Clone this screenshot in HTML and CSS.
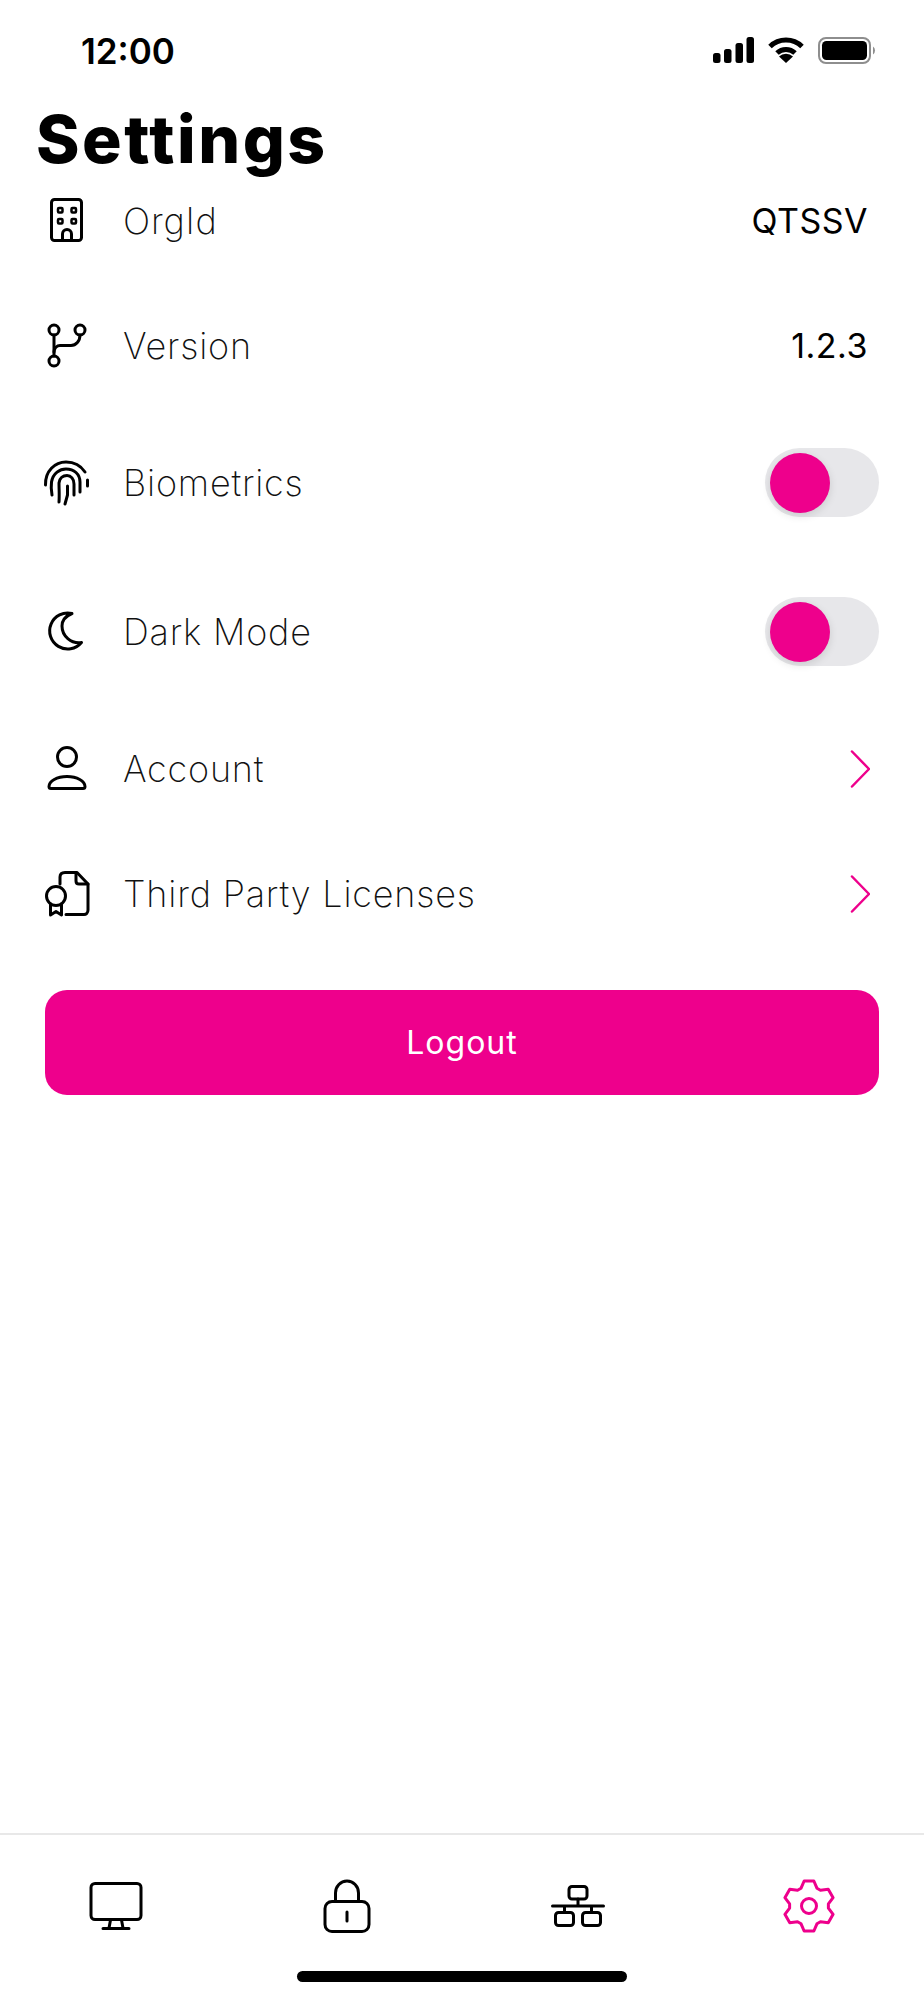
FILE: index.html
```html
<!DOCTYPE html>
<html lang="en">
<head>
    <meta charset="UTF-8">
    <meta name="viewport" content="width=device-width, initial-scale=1.0">
    <title>Settings</title>
    <link rel="stylesheet" href="styles.css">
</head>
<body>

<div class="status-bar">
    <span class="status-time">12:00</span>
    <div class="status-icons">
        <svg class="status-signal" width="41" height="26" viewBox="0 0 41 26">
            <rect x="0" y="16" width="7.5" height="10" rx="2.5"/>
            <rect x="11" y="12" width="7.5" height="14" rx="2.5"/>
            <rect x="22.5" y="6" width="7.5" height="20" rx="2.5"/>
            <rect x="33.5" y="0" width="7.5" height="26" rx="2.5"/>
        </svg>
        <svg class="status-wifi" width="36" height="26" viewBox="0 0 36 26">
            <path d="M2 9.5A23 23 0 0 1 34 9.5" fill="none" stroke="#000" stroke-width="5"/>
            <path d="M9 16A13 13 0 0 1 27 16" fill="none" stroke="#000" stroke-width="5"/>
            <path d="M18 26L11 19.5A10 10 0 0 1 25 19.5Z"/>
        </svg>
        <svg class="status-battery" width="58" height="27" viewBox="0 0 58 27">
            <rect x="1" y="1" width="51" height="25" rx="7" fill="none" stroke="#8e8e8e" stroke-width="2"/>
            <rect x="4" y="4" width="45" height="19" rx="4.5"/>
            <path d="M55 9.5a5 5 0 0 1 0 8Z" fill="#8e8e8e"/>
        </svg>
    </div>
</div>

<h1 class="page-title">Settings</h1>

<div class="settings-list">
    <div class="row">
        <svg class="row-icon" viewBox="0 0 48 48">
            <rect x="8.5" y="2.5" width="30" height="41" rx="3"/>
            <rect class="thin" x="15" y="11" width="4.5" height="4.5" rx="1"/>
            <rect class="thin" x="28.5" y="11" width="4.5" height="4.5" rx="1"/>
            <rect class="thin" x="15" y="22" width="4.5" height="4.5" rx="1"/>
            <rect class="thin" x="28.5" y="22" width="4.5" height="4.5" rx="1"/>
            <path d="M19.5 43V37a4.5 4.5 0 0 1 9 0V43"/>
        </svg>
        <span class="row-label">OrgId</span>
        <span class="row-value">QTSSV</span>
    </div>
    <div class="row">
        <svg class="row-icon" viewBox="0 0 48 48">
            <circle cx="11" cy="8" r="5"/>
            <circle cx="37" cy="8" r="5"/>
            <circle cx="11" cy="39" r="5"/>
            <path d="M11 13V34"/>
            <path d="M37 13C37 19 33 23.5 28 23.5H17C14 23.5 11 26 11 30"/>
        </svg>
        <span class="row-label">Version</span>
        <span class="row-value">1.2.3</span>
    </div>
    <div class="row row-toggle">
        <svg class="row-icon" viewBox="0 0 48 48">
            <path d="M2.500 26C2 12 12 3 23 3C31 3 38 7 42 13"/>
            <path d="M44.500 21V27"/>
            <path d="M9 36C8 31 8 27 8.500 23C10 14 17 10 23 10C31 10 37 15 37 23V33"/>
            <path d="M16 43C16.500 36 16 30 16 24C16.500 19 20 16.500 24 16.500C28 16.500 31 20 31 25V36"/>
            <path d="M24.500 27V36L22 45"/>
        </svg>
        <span class="row-label">Biometrics</span>
        <div class="toggle"><div class="toggle-knob"></div></div>
    </div>
    <div class="row row-toggle">
        <svg class="row-icon" viewBox="0 0 48 48">
            <path d="M29 5.500A18 18 0 1 0 38.500 34.500C28 36 19 28 19 18C19 12 23 8 29 5.500Z"/>
        </svg>
        <span class="row-label">Dark Mode</span>
        <div class="toggle"><div class="toggle-knob"></div></div>
    </div>
    <div class="row">
        <svg class="row-icon" viewBox="0 0 48 48">
            <circle cx="24" cy="12" r="9.500"/>
            <path d="M8 43.500H40A2 2 0 0 0 42 41.500C42 36 34 31.500 24 31.500S6 36 6 41.500A2 2 0 0 0 8 43.500Z"/>
        </svg>
        <span class="row-label">Account</span>
        <svg class="row-chevron" width="20" height="38" viewBox="0 0 20 38">
            <path d="M2 1.500L19 19L2 36.500"/>
        </svg>
    </div>
    <div class="row">
        <svg class="row-icon" viewBox="0 0 48 48">
            <path d="M17 14V7C17 4 19 2.500 22 2.500H34L45 14V40C45 43 43 44.500 41 44.500H23"/>
            <path d="M33 2.500V11C33 13 34 14 36 14H45"/>
            <circle cx="13" cy="26" r="9.500"/>
            <path d="M7.500 34V45L13 41.500L18.500 45V34"/>
        </svg>
        <span class="row-label">Third Party Licenses</span>
        <svg class="row-chevron" width="20" height="38" viewBox="0 0 20 38">
            <path d="M2 1.500L19 19L2 36.500"/>
        </svg>
    </div>
</div>

<button class="logout-button">Logout</button>

<div class="tab-bar">
    <div class="tabs">
        <div class="tab">
            <svg class="tab-icon" viewBox="0 0 60 60">
                <rect x="5" y="7.500" width="50" height="36" rx="4"/>
                <path d="M24.500 44L23 52M35.500 44L37 52M17 52.500H43"/>
            </svg>
        </div>
        <div class="tab">
            <svg class="tab-icon" viewBox="0 0 60 60">
                <rect x="8" y="25.500" width="44" height="30" rx="7"/>
                <path d="M18.500 25V17A11.500 12 0 0 1 41.500 17V25"/>
                <path d="M30 36V45"/>
            </svg>
        </div>
        <div class="tab">
            <svg class="tab-icon" viewBox="0 0 60 60">
                <rect x="21" y="10.500" width="18" height="12.500" rx="3"/>
                <path d="M30 23V30M4.500 30H55.500M16.500 30V36M43.500 30V36"/>
                <rect x="7.500" y="36.500" width="18" height="13" rx="3"/>
                <rect x="34.500" y="36.500" width="18" height="13" rx="3"/>
            </svg>
        </div>
        <div class="tab tab-active">
            <svg class="tab-icon" viewBox="0 0 60 60">
                <path d="M25.130 4.970L34.870 4.970L37.930 12.190L41.460 14.220L49.250 13.270L54.110 21.700L49.390 27.960L49.390 32.040L54.110 38.300L49.250 46.730L41.460 45.780L37.930 47.810L34.870 55.030L25.130 55.030L22.070 47.810L18.540 45.780L10.750 46.730L5.890 38.300L10.610 32.040L10.610 27.960L5.890 21.700L10.750 13.270L18.540 14.220L22.070 12.190Z"/>
                <circle cx="30" cy="30" r="7.500"/>
            </svg>
        </div>
    </div>
    <div class="home-indicator"></div>
</div>

</body>
</html>
```

FILE: styles.css
```css
body {
    background-color: #ffffff;
    color: #000000;
    font-family: Inter, "Liberation Sans", sans-serif;
    margin: 0;
    padding: 0;
    min-height: 2000px;
    display: flex;
    flex-direction: column;
}

.status-bar {
    display: flex;
    justify-content: space-between;
    align-items: center;
    height: 26px;
    padding: 38px 48px 0 81px;
}

.status-time {
    font-size: 35px;
    font-weight: 600;
    line-height: 26px;
}

.status-icons {
    display: flex;
    align-items: center;
    gap: 14px;
    margin-top: -2px;
}

.page-title {
    font-size: 66px;
    font-weight: 800;
    letter-spacing: 2.5px;
    line-height: 70px;
    height: 54px;
    margin: 0;
    padding: 40px 0 0 36px;
}

.settings-list {
    display: flex;
    flex-direction: column;
}

.row {
    display: flex;
    align-items: center;
    height: 125px;
    padding: 0 45px 0 43px;
}

.row-toggle {
    height: 149px;
}

.row-icon {
    width: 48px;
    height: 48px;
    flex-shrink: 0;
    margin-right: 32px;
    fill: none;
    stroke: #000000;
    stroke-width: 3;
    stroke-linecap: round;
    stroke-linejoin: round;
}

.row-icon .thin {
    stroke-width: 2.5;
}

.row-label {
    flex: 1;
    font-size: 36px;
    font-weight: 200;
    letter-spacing: 0.8px;
    color: #111111;
}

.row-value {
    font-size: 34px;
    font-weight: 400;
    letter-spacing: 0.5px;
    margin-right: 11px;
}

.row-chevron {
    margin-right: 9px;
    fill: none;
    stroke: #ee008c;
    stroke-width: 2.5;
    stroke-linecap: round;
    stroke-linejoin: round;
}

.toggle {
    display: flex;
    align-items: center;
    box-sizing: border-box;
    width: 114px;
    height: 69px;
    padding: 0 5px;
    background-color: #e7e7ea;
    border-radius: 35px;
}

.toggle-knob {
    width: 60px;
    height: 60px;
    background-color: #ee008c;
    border-radius: 50%;
    box-shadow: 0 3px 8px rgba(0, 0, 0, 0.12);
}

.logout-button {
    display: block;
    width: 834px;
    height: 105px;
    margin: 34px 45px 0;
    background-color: #ee008c;
    color: #ffffff;
    border: none;
    border-radius: 22px;
    font-family: inherit;
    font-size: 32px;
    font-weight: 400;
    letter-spacing: 1px;
}

.tab-bar {
    margin-top: auto;
    border-top: 2px solid #e8e8e8;
}

.tabs {
    display: flex;
    padding-top: 41px;
}

.tab {
    flex: 1;
    display: flex;
    justify-content: center;
}

.tab-icon {
    width: 60px;
    height: 60px;
    fill: none;
    stroke: #000000;
    stroke-width: 3;
    stroke-linecap: round;
    stroke-linejoin: round;
}

.tab-active .tab-icon {
    stroke: #ee008c;
}

.home-indicator {
    width: 330px;
    height: 11px;
    margin: 35px auto 18px;
    background-color: #000000;
    border-radius: 6px;
}
```
